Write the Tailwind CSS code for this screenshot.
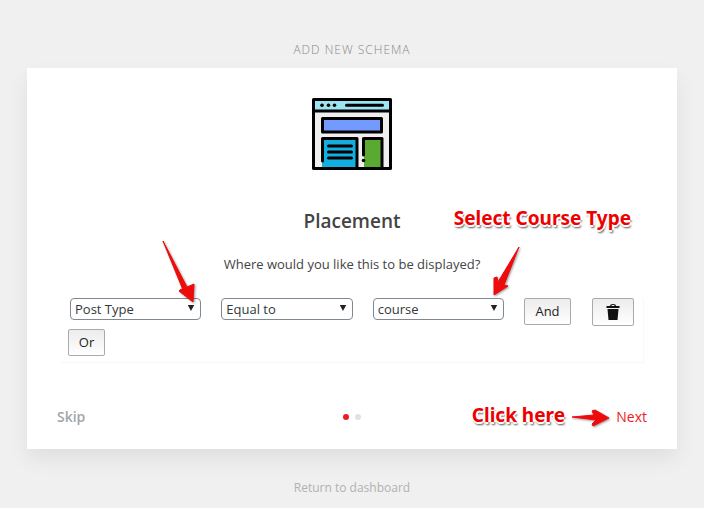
<!DOCTYPE html>
<html lang="en">
<head>
    <meta charset="UTF-8">
    <meta name="viewport" content="width=device-width, initial-scale=1.0">
    <title>Add New Schema</title>
    <script src="https://cdn.jsdelivr.net/npm/@tailwindcss/browser@4"></script>
</head>
<body class="min-h-screen bg-[#f0f0f0] px-[27px] pt-10 font-['Open_Sans','Noto_Sans',sans-serif] text-[13px] text-[#444]">
    <h1 class="mb-2 text-center text-[12px] leading-5 font-light tracking-[1px] text-[#888]">ADD NEW SCHEMA</h1>

    <main class="bg-white px-[30px] pt-[30px] pb-5 shadow-[0_10px_20px_rgba(0,0,0,0.07)]">
        <!-- Page layout icon -->
        <svg class="mx-auto block h-[72px] w-20" viewBox="0 0 80 72" aria-hidden="true">
            <rect x="1.5" y="1.5" width="77" height="69" fill="#efefef"/>
            <rect x="1.5" y="1.5" width="77" height="11" fill="#9de4f3"/>
            <rect x="10" y="20.5" width="60" height="13.5" fill="#739bff"/>
            <rect x="10" y="40.5" width="35" height="30" fill="#12aee0"/>
            <rect x="52" y="40.5" width="18.5" height="30" fill="#5aaa32"/>
            <g fill="none" stroke="#000" stroke-width="3" stroke-linecap="round" stroke-linejoin="round">
                <rect x="1.5" y="1.5" width="77" height="69"/>
                <path d="M1.5 13h77M34.5 7.2h36"/>
                <path d="M10.500 20.500h59v13.500h-59z"/>
                <path d="M10.500 63V40.500H45v30M51.500 57V40.500h18.500v30"/>
                <path d="M16.500 48h23M16.500 54h23M16.500 60h23"/>
            </g>
            <circle cx="10" cy="7.200" r="1.800"/>
            <circle cx="16.500" cy="7.200" r="1.800"/>
            <circle cx="22.500" cy="7.200" r="1.800"/>
            <circle cx="51.500" cy="62.500" r="1.800"/>
        </svg>

        <h2 class="mt-9 text-center text-[19px] leading-[30px] font-semibold">Placement</h2>
        <p class="mt-4 text-center leading-6">Where would you like this to be displayed?</p>

        <!-- Placement rules -->
        <div class="mx-[3px] mt-[22px] border-r border-b border-[#f8f8f8] pr-[9px] pb-[6px] pl-2">
            <div class="flex items-start text-[#32373c]">
                <div class="relative mr-5 ml-[2px] min-w-0 flex-1">
                    <select aria-label="Location" class="block h-[22px] w-full appearance-none rounded-[4px] border border-[#7e8993] bg-white pl-1 text-[13px] leading-5">
                        <option>Post Type</option>
                    </select>
                    <svg class="pointer-events-none absolute top-[7px] right-[6px] h-[6px] w-2" viewBox="0 0 8 6" fill="#222"><path d="M.8 0h6.400L4 6z"/></svg>
                    <svg class="absolute right-[5px] bottom-4 h-[64px] w-[34px] drop-shadow-[1px_1px_1px_rgba(0,0,0,0.4)]" viewBox="0 0 34 64" fill="#ee0b0b" stroke="#ee0b0b" stroke-linejoin="round"><path d="M1 1 25 47 32 44 31 62 17 51 19 49 21 50Z"/></svg>
                </div>
                <div class="relative mr-5 min-w-0 flex-1">
                    <select aria-label="Condition" class="block h-[22px] w-full appearance-none rounded-[4px] border border-[#7e8993] bg-white pl-1 text-[13px] leading-5">
                        <option>Equal to</option>
                    </select>
                    <svg class="pointer-events-none absolute top-[7px] right-[6px] h-[6px] w-2" viewBox="0 0 8 6" fill="#222"><path d="M.8 0h6.400L4 6z"/></svg>
                </div>
                <div class="relative mr-5 min-w-0 flex-1">
                    <select aria-label="Value" class="block h-[22px] w-full appearance-none rounded-[4px] border border-[#7e8993] bg-white pl-1 text-[13px] leading-5">
                        <option>course</option>
                    </select>
                    <svg class="pointer-events-none absolute top-[7px] right-[6px] h-[6px] w-2" viewBox="0 0 8 6" fill="#222"><path d="M.8 0h6.400L4 6z"/></svg>
                    <svg class="absolute -right-4 bottom-6 h-[50px] w-[27px] drop-shadow-[1px_1px_1px_rgba(0,0,0,0.4)]" viewBox="0 0 27 50" fill="#ee0b0b" stroke="#ee0b0b" stroke-linejoin="round"><path d="M26 1 11 39 15 40 1 49 1 32 4 31 5 36Z"/></svg>
                    <span class="absolute bottom-[90px] left-[81px] font-['Noto_Sans',sans-serif] text-[19px] leading-6 font-bold whitespace-nowrap text-[#ee0000] [text-shadow:-2px_0_#fff,2px_0_#fff,0_-2px_#fff,0_2px_#fff,1px_3px_2px_#555]">Select Course Type</span>
                </div>
                <button type="button" class="mr-[21px] h-[27px] w-[47px] rounded-[2px] border border-[#aaa] bg-linear-to-b from-[#ececec] to-white text-[13px] text-[#222]">And</button>
                <button type="button" aria-label="Delete rule" class="flex h-7 w-[42px] items-center justify-center rounded-[2px] border border-[#aaa] bg-linear-to-b from-[#ececec] to-white">
                    <svg class="h-4 w-[14px]" viewBox="0 0 14 16" fill="#111"><path d="M4 2C4 .7 5 0 7 0s3 .7 3 2h3.500v2H.5V2zM5.300 2h3.400C8.600 1.300 8 1 7 1s-1.600.3-1.700 1zM1.500 5h11l-1 11h-9z"/></svg>
                </button>
            </div>
            <button type="button" class="mt-[3px] block h-[27px] w-[37px] rounded-[2px] border border-[#aaa] bg-linear-to-b from-[#ececec] to-white text-[13px] text-[#222]">Or</button>
        </div>

        <!-- Wizard navigation -->
        <div class="mt-[42px] grid grid-cols-3 items-center text-[14px] leading-6">
            <a href="#" class="font-semibold text-[#a1a5a9]">Skip</a>
            <div class="flex justify-center gap-[6px]">
                <span class="size-[6px] rounded-full bg-[#ed1c24]"></span>
                <span class="size-[6px] rounded-full bg-[#e2e2e2]"></span>
            </div>
            <div class="relative justify-self-end">
                <a href="#" class="text-[#ed1c24]">Next</a>
                <svg class="absolute top-1 right-[37px] h-[18px] w-[39px] drop-shadow-[1px_1px_1px_rgba(0,0,0,0.4)]" viewBox="0 0 39 18" fill="#ee0b0b" stroke="#ee0b0b" stroke-linejoin="round"><path d="M1 8 23 6 21 2 24 1 38 9 22 17 21 15 25 11Z"/></svg>
                <span class="absolute -top-[2px] right-[82px] font-['Noto_Sans',sans-serif] text-[19px] leading-6 font-bold whitespace-nowrap text-[#ee0000] [text-shadow:-2px_0_#fff,2px_0_#fff,0_-2px_#fff,0_2px_#fff,1px_3px_2px_#555]">Click here</span>
            </div>
        </div>
    </main>

    <footer class="mt-[29px] text-center text-[12px] leading-5">
        <a href="#" class="text-[#b0b0b0]">Return to dashboard</a>
    </footer>
</body>
</html>
